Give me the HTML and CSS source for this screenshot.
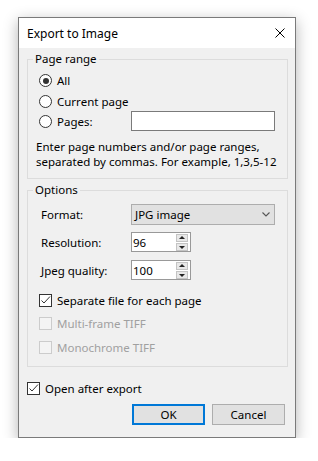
FILE: index.html
```html
<!DOCTYPE html>
<html lang="en">
<head>
<meta charset="UTF-8">
<title>Export to Image</title>
<link rel="stylesheet" href="styles.css">
</head>
<body>
<div class="window">
  <div class="titlebar">
    <span class="title">Export to Image</span>
    <svg class="close" width="10" height="10" viewBox="0 0 10 10">
      <path d="M0.5 0.5 L9.5 9.5 M9.5 0.5 L0.5 9.5" stroke="#000" stroke-width="1" fill="none"/>
    </svg>
  </div>

  <div class="client">
    <fieldset class="group range">
      <legend>Page range</legend>
      <div class="opt first"><span class="radio checked"></span><span>All</span></div>
      <div class="opt"><span class="radio"></span><span>Current page</span></div>
      <div class="opt"><span class="radio"></span><span class="opt-label">Pages:</span><span class="textbox"></span></div>
      <p class="hint">Enter page numbers and/or page ranges,<br>separated by commas. For example, 1,3,5-12</p>
    </fieldset>

    <fieldset class="group options">
      <legend>Options</legend>
      <div class="field format">
        <span class="field-label">Format:</span>
        <div class="combo">
          <span>JPG image</span>
          <svg width="8" height="5" viewBox="0 0 8 5"><path d="M0.5 0.5 L4 4 L7.5 0.5" stroke="#555" stroke-width="1.1" fill="none"/></svg>
        </div>
      </div>
      <div class="field res">
        <span class="field-label">Resolution:</span>
        <div class="spin">
          <span class="spin-value">96</span>
          <span class="spin-btns"><span class="spin-btn up"></span><span class="spin-btn down"></span></span>
        </div>
      </div>
      <div class="field quality">
        <span class="field-label">Jpeg quality:</span>
        <div class="spin">
          <span class="spin-value">100</span>
          <span class="spin-btns"><span class="spin-btn up"></span><span class="spin-btn down"></span></span>
        </div>
      </div>

      <div class="check sep">
        <span class="box"><svg width="11" height="11" viewBox="0 0 11 11"><path d="M1.5 5.5 L4 8 L10 1.5" stroke="#333" stroke-width="1" fill="none"/></svg></span>
        <span>Separate file for each page</span>
      </div>
      <div class="check disabled"><span class="box"></span><span>Multi-frame TIFF</span></div>
      <div class="check disabled last"><span class="box"></span><span>Monochrome TIFF</span></div>
    </fieldset>

    <div class="check open">
      <span class="box"><svg width="11" height="11" viewBox="0 0 11 11"><path d="M1.5 5.5 L4 8 L10 1.5" stroke="#333" stroke-width="1" fill="none"/></svg></span>
      <span>Open after export</span>
    </div>

    <div class="buttons">
      <button class="btn default">OK</button>
      <button class="btn">Cancel</button>
    </div>
  </div>
</div>
</body>
</html>
```

FILE: styles.css
```css
body {
  margin: 0;
  background: #fff;
  font-family: "Noto Sans", sans-serif;
  font-size: 11.5px;
  color: #000;
}

.window {
  margin: 17px 0 0 18px;
  width: 276px;
  border: 1px solid #7a7a7a;
  background: #f0f0f0;
  box-shadow: 0 4px 14px rgba(0, 0, 0, 0.3);
}

.titlebar {
  height: 30px;
  background: #fff;
  display: flex;
  align-items: center;
  justify-content: space-between;
  padding: 0 10px 0 8px;
}
.title {
  font-size: 12px;
}
.close {
  display: block;
  margin-bottom: 1px;
}

.client {
  padding: 4px 0 12px 0;
}

.group {
  margin: 0 7px 0 8px;
  border: 1px solid #dcdcdc;
  padding: 4px 8px 9px 8px;
  min-width: 0;
}
.group legend {
  margin-left: -3px;
  padding: 0 2px;
  line-height: 14px;
}
.options {
  margin-top: 4px;
  padding-top: 7px;
  padding-bottom: 7px;
}

/* radio rows */
.opt {
  display: flex;
  align-items: center;
  height: 20px;
  margin-left: 3px;
}
.opt.first {
  height: 21px;
}
.radio {
  width: 11px;
  height: 11px;
  border: 1px solid #333;
  border-radius: 50%;
  background: #fff;
  margin-right: 5px;
  position: relative;
  flex: none;
}
.radio.checked::after {
  content: "";
  position: absolute;
  left: 2.5px;
  top: 2.5px;
  width: 6px;
  height: 6px;
  border-radius: 50%;
  background: #333;
}
.opt-label {
  width: 74px;
}
.textbox {
  width: 142px;
  height: 18px;
  border: 1px solid #7a7a7a;
  background: #fff;
}
.hint {
  margin: 8px 0 0 0;
  line-height: 15px;
}

/* options fields */
.field {
  display: flex;
  align-items: center;
  margin-left: 5px;
}
.field-label {
  width: 90px;
}
.format {
  height: 21px;
}
.res {
  height: 20px;
  margin-top: 7px;
}
.quality {
  height: 20px;
  margin-top: 8px;
}
.combo {
  width: 139px;
  height: 19px;
  border: 1px solid #adadad;
  background: #e1e1e1;
  display: flex;
  align-items: center;
  justify-content: space-between;
  padding: 0 0 0 3px;
  box-sizing: content-box;
}
.combo svg {
  margin-right: 4px;
}
.spin {
  width: 58px;
  height: 18px;
  border: 1px solid #999;
  background: #fff;
  display: flex;
  align-items: center;
  justify-content: space-between;
}
.spin-value {
  padding-left: 1px;
}
.spin-btns {
  display: flex;
  flex-direction: column;
  gap: 1px;
  margin-right: 2px;
}
.spin-btn {
  width: 10px;
  height: 6px;
  border: 1px solid #c4c4c4;
  background: #e8e8e8;
  position: relative;
}
.spin-btn::after {
  content: "";
  position: absolute;
  left: 2px;
  border-left: 3px solid transparent;
  border-right: 3px solid transparent;
}
.spin-btn.up::after {
  top: 1px;
  border-bottom: 3px solid #222;
}
.spin-btn.down::after {
  top: 2px;
  border-top: 3px solid #222;
}

/* checkboxes */
.check {
  display: flex;
  align-items: center;
  height: 23px;
  margin-left: 3px;
}
.check.sep {
  margin-top: 9px;
}
.check.last {
  height: 24px;
}
.box {
  width: 11px;
  height: 11px;
  border: 1px solid #333;
  background: #fff;
  margin-right: 5px;
  flex: none;
  display: flex;
}
.check.disabled {
  color: #a0a0a0;
}
.check.disabled .box {
  border-color: #cccccc;
  background: #f4f4f4;
}
.check.open {
  margin: 11px 0 0 8px;
  height: 20px;
}

/* dialog buttons */
.buttons {
  display: flex;
  justify-content: flex-end;
  gap: 7px;
  padding-right: 10px;
  margin-top: 6px;
}
.btn {
  width: 73px;
  height: 21px;
  border: 1px solid #adadad;
  background: #e1e1e1;
  font-family: "Noto Sans", sans-serif;
  font-size: 11.5px;
  color: #000;
  padding: 0;
}
.btn.default {
  border: 2px solid #0078d7;
}
```
